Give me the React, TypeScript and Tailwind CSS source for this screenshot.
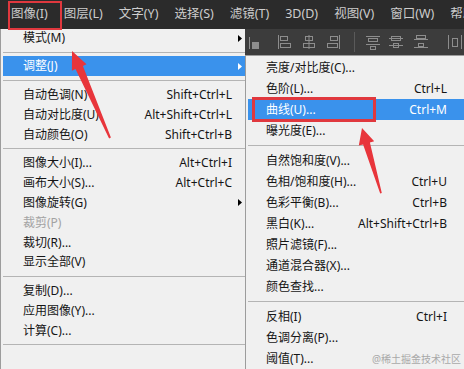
import React from 'react';

const FONT = '"Noto Sans", "Noto Sans CJK SC", sans-serif';

type Item = { label?: string; sc?: string; arrow?: boolean; hl?: boolean; dis?: boolean; sep?: boolean };

const leftItems: Item[] = [
  { label: '模式(M)', arrow: true },
  { sep: true },
  { label: '调整(J)', arrow: true, hl: true },
  { sep: true },
  { label: '自动色调(N)', sc: 'Shift+Ctrl+L' },
  { label: '自动对比度(U)', sc: 'Alt+Shift+Ctrl+L' },
  { label: '自动颜色(O)', sc: 'Shift+Ctrl+B' },
  { sep: true },
  { label: '图像大小(I)...', sc: 'Alt+Ctrl+I' },
  { label: '画布大小(S)...', sc: 'Alt+Ctrl+C' },
  { label: '图像旋转(G)', arrow: true },
  { label: '裁剪(P)', dis: true },
  { label: '裁切(R)...' },
  { label: '显示全部(V)' },
  { sep: true },
  { label: '复制(D)...' },
  { label: '应用图像(Y)...' },
  { label: '计算(C)...' },
  { sep: true },
  { label: '' },
];

const subItems: Item[] = [
  { label: '亮度/对比度(C)...' },
  { label: '色阶(L)...', sc: 'Ctrl+L' },
  { label: '曲线(U)...', sc: 'Ctrl+M', hl: true },
  { label: '曝光度(E)...' },
  { sep: true },
  { label: '自然饱和度(V)...' },
  { label: '色相/饱和度(H)...', sc: 'Ctrl+U' },
  { label: '色彩平衡(B)...', sc: 'Ctrl+B' },
  { label: '黑白(K)...', sc: 'Alt+Shift+Ctrl+B' },
  { label: '照片滤镜(F)...' },
  { label: '通道混合器(X)...' },
  { label: '颜色查找...' },
  { sep: true },
  { label: '反相(I)', sc: 'Ctrl+I' },
  { label: '色调分离(P)...' },
  { label: '阈值(T)...' },
];

const menuBar = ['图像(I)', '图层(L)', '文字(Y)', '选择(S)', '滤镜(T)', '3D(D)', '视图(V)', '窗口(W)', '帮助(H)'];

function Arrow({ white }: { white?: boolean }) {
  return (
    <svg width="4" height="7" viewBox="0 0 4 7">
      <path d="M0 0 L4 3.5 L0 7 Z" fill={white ? '#ffffff' : '#000000'} />
    </svg>
  );
}

function Sep() {
  return (
    <div className="h-[9px] flex items-center">
      <div className="h-px w-full bg-[#b4b4b4]" />
    </div>
  );
}

function LeftRow({ it, first }: { it: Item; first: boolean }) {
  return (
    <div
      className={
        (first ? 'h-[20px] ' : 'h-[21px] ') +
        'flex items-center pl-[20px] ' +
        (it.hl ? 'bg-[#3a92ec] text-white' : it.dis ? 'text-[#a3a3a3]' : 'text-[#151515]')
      }
    >
      <span className="flex-1 whitespace-nowrap">{it.label}</span>
      {it.sc && <span className="whitespace-nowrap">{it.sc}</span>}
      <div className="w-[13px] h-full flex items-center pl-[6px]">{it.arrow && <Arrow white={it.hl} />}</div>
    </div>
  );
}

function SubRow({ it }: { it: Item }) {
  return (
    <div
      className={
        'h-[21px] flex items-center pl-[18px] pr-[17px] ' + (it.hl ? 'bg-[#3a92ec] text-white' : 'text-[#151515]')
      }
    >
      <span className="flex-1 whitespace-nowrap">{it.label}</span>
      {it.sc && <span className="whitespace-nowrap">{it.sc}</span>}
    </div>
  );
}

function ToolIcons() {
  const c = '#8d8d8d';
  return (
    <div className="flex items-center h-full">
      <svg className="ml-[3px]" width="12" height="16" viewBox="0 0 12 16">
        <line x1="1.5" y1="3" x2="1.5" y2="15" stroke={c} />
        <rect x="4" y="8" width="7" height="7" fill={c} />
      </svg>
      <svg className="ml-[18px]" width="14" height="16" viewBox="0 0 14 16">
        <line x1="0.5" y1="1" x2="0.5" y2="15" stroke={c} />
        <rect x="2.5" y="2.5" width="7" height="4" fill="none" stroke={c} />
        <rect x="2.5" y="9.5" width="10" height="4" fill="none" stroke={c} />
      </svg>
      <svg className="ml-[11px]" width="12" height="16" viewBox="0 0 12 16">
        <line x1="6" y1="1" x2="6" y2="15" stroke={c} />
        <rect x="2.5" y="2.5" width="7" height="4" fill="none" stroke={c} />
        <rect x="0.5" y="9.5" width="11" height="4" fill="none" stroke={c} />
      </svg>
      <svg className="ml-[11px]" width="14" height="16" viewBox="0 0 14 16">
        <line x1="13.5" y1="1" x2="13.5" y2="15" stroke={c} />
        <rect x="4.5" y="2.5" width="7" height="4" fill="none" stroke={c} />
        <rect x="1.5" y="9.5" width="10" height="4" fill="none" stroke={c} />
      </svg>
      <div className="ml-[14px] w-px h-[20px] bg-[#5a5a5a]" />
      <svg className="ml-[11px]" width="14" height="16" viewBox="0 0 14 16">
        <line x1="0" y1="2.5" x2="14" y2="2.5" stroke={c} />
        <rect x="2.5" y="4.5" width="9" height="3" fill="none" stroke={c} />
        <line x1="0" y1="10.5" x2="14" y2="10.5" stroke={c} />
        <rect x="4.5" y="12.5" width="5" height="3" fill="none" stroke={c} />
      </svg>
      <svg className="ml-[9px]" width="14" height="16" viewBox="0 0 14 16">
        <line x1="0" y1="4.5" x2="14" y2="4.5" stroke={c} />
        <rect x="2.5" y="2.5" width="9" height="4" fill="none" stroke={c} />
        <line x1="0" y1="11.5" x2="14" y2="11.5" stroke={c} />
        <rect x="4.5" y="9.5" width="5" height="4" fill="none" stroke={c} />
      </svg>
      <svg className="ml-[11px]" width="14" height="16" viewBox="0 0 14 16">
        <rect x="2.5" y="1.5" width="9" height="3" fill="none" stroke={c} />
        <line x1="0" y1="5.5" x2="14" y2="5.5" stroke={c} />
        <rect x="4.5" y="9.5" width="5" height="3" fill="none" stroke={c} />
        <line x1="0" y1="13.5" x2="14" y2="13.5" stroke={c} />
      </svg>
      <svg className="ml-[20px]" width="14" height="16" viewBox="0 0 14 16">
        <line x1="0.5" y1="1" x2="0.5" y2="15" stroke={c} />
        <rect x="4.5" y="4.5" width="5" height="8" fill="none" stroke={c} />
        <line x1="13.5" y1="1" x2="13.5" y2="15" stroke={c} />
      </svg>
    </div>
  );
}

export default function App() {
  return (
    <div
      className="relative w-[464px] h-[369px] overflow-hidden flex flex-col bg-[#3c3c3c] text-[12px] leading-none"
      style={{ fontFamily: FONT }}
    >
      {/* menu bar */}
      <div className="h-[29px] bg-[#2b2b2b] flex items-center pl-[11px] gap-[16px] text-[#cdcdcd] text-[12.5px] whitespace-nowrap">
        {menuBar.map((m) => (
          <span key={m}>{m}</span>
        ))}
      </div>

      <div className="flex flex-1 min-h-0">
        {/* left menu */}
        <div className="w-[245px] bg-[#f0f0f0] border-l border-[#9c9c9c] pl-[2px] flex flex-col">
          {leftItems.map((it, i) => (it.sep ? <Sep key={i} /> : <LeftRow key={i} it={it} first={i === 0} />))}
        </div>

        {/* right column */}
        <div className="flex-1 flex flex-col min-w-0">
          <div className="h-[26px] bg-[#3c3c3c]">
            <ToolIcons />
          </div>
          <div className="flex-1 bg-[#f0f0f0] border-l border-t border-[#9c9c9c] pt-[1px] pl-[2px] flex flex-col">
            {subItems.map((it, i) => (it.sep ? <Sep key={i} /> : <SubRow key={i} it={it} />))}
          </div>
        </div>
      </div>

      {/* annotations */}
      <div className="absolute left-[8px] top-[1px] w-[54px] h-[29px] border-2 border-[#e0383e]" />
      <div className="absolute left-[252px] top-[97px] w-[124px] h-[25px] border-[3px] border-[#e0383e]" />
      <svg className="absolute left-0 top-0 pointer-events-none" width="464" height="369" viewBox="0 0 464 369">
        <polygon
          points="72,51 86.5,64.3 82.9,65.9 110.9,137.6 109.1,138.4 75.5,69.1 71.9,70.7"
          fill="#e8353b"
        />
        <polygon
          points="362,128 374.2,141.2 369.9,142.4 381.8,193 380.2,193.5 363.1,144.4 358.8,145.6"
          fill="#e8353b"
        />
      </svg>
      <div className="absolute right-[3px] bottom-[5px] text-[10px] text-[#a9a9a9] whitespace-nowrap">
        @稀土掘金技术社区
      </div>
    </div>
  );
}
